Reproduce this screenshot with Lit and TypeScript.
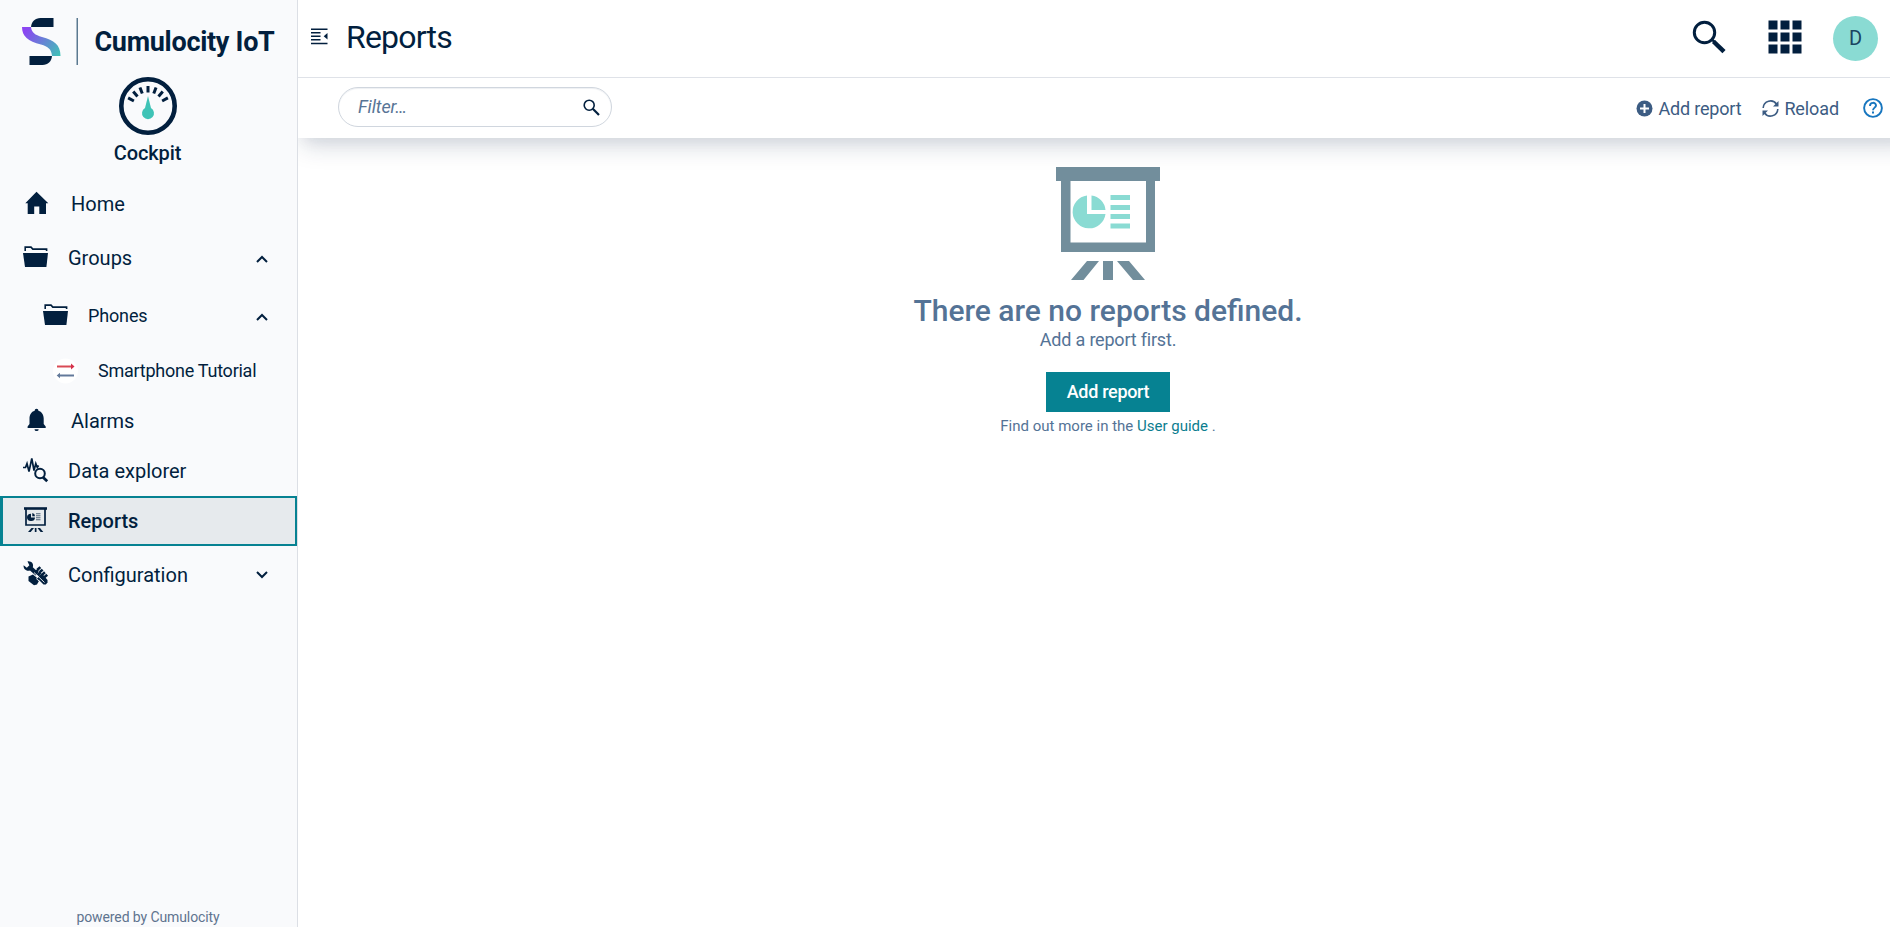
import { LitElement, html, svg, css } from "lit";
import { customElement, property } from "lit/decorators.js";
import { classMap } from "lit/directives/class-map.js";

const folder = svg`
  <path d="M2.2 6V2.1H8L9.8 4.1H23.6V6" fill="none" stroke="currentColor" stroke-width="1.6"/>
  <path d="M0 8H25L23.4 22H2Z"/>`;

const icons: Record<string, unknown> = {
  home: svg`<path d="M13.5 .8 25.3 12.2H23V23H16.3V15.6H11.2V23H4.7V12.2H2.3Z"/>`,
  folder,
  bell: svg`<path d="M13.5 .8c1.2 0 1.9.8 1.9 1.9C18.900 3.700 20.700 6.800 20.700 10.500V16l2 2.600V20H4.600V18.600L6.500 16V10.500C6.500 6.800 8.200 3.700 11.700 2.700 11.700 1.600 12.400.8 13.500.8ZM11.500 21.200h4.200a2.100 1.900 0 0 1-4.200 0Z"/>`,
  data: svg`
    <path d="M0 9.500H2.500L4 5.500 6 13.500 8.800 .500 11 12.500 12.800 5.500 14.300 9.500 15.600 7.500" fill="none" stroke="currentColor" stroke-width="1.700"/>
    <circle cx="17" cy="15.500" r="4.800" fill="none" stroke="currentColor" stroke-width="2"/>
    <path d="M20 19.200 24.200 23.200" stroke="currentColor" stroke-width="2.800"/>`,
  reports: svg`
    <path d="M1 -.8H24V1.800H1Z"/>
    <path d="M3 1V17H22V1" fill="none" stroke="currentColor" stroke-width="1.700"/>
    <path d="M8 5.800V9.500H12A4 3.600 0 1 1 8 5.800Z M9.300 5V8.200H12A3.500 3.300 0 0 0 9.300 5Z"/>
    <path d="M13 5.700H17.500M13 7.700H17.500M13 9.700H17.500M13 11.700H17.500" stroke="currentColor" stroke-width="1.100" opacity=".65"/>
    <path d="M8.500 20H11L7.700 24H5ZM11.800 20H13.500V24H11.800ZM14.500 20H17L20.300 24H17.600Z"/>`,
  config: svg`
    <path d="M4.500 -.600C8.500 -1.200 11 2 9.800 5.300L15.500 10.500 12.700 13.500 7 8.400C3.500 9.600 .200 7 .600 3.200L3.800 5.800 6.400 3.200Z"/>
    <path d="M15 5.500 24 15.500M12.700 8.500 18 14" fill="none" stroke="currentColor" stroke-width="4" stroke-dasharray="2.600 .800"/>
    <path d="M16.500 13 19 11.500 24.500 18V20.500L22.800 22.500H20.500L14.500 16.500Z"/>
    <path d="M5.500 14.500 10 12.500 16.500 18 14 22.500 11 23.300 5.500 19Z"/>
    <path d="M11 10.500 21.500 20.500M16.700 19.500 13.200 16.500" stroke="#f9fafc" stroke-width=".900"/>`,
  link: svg`
    <circle cx="12.500" cy="13" r="12.500" fill="#fff"/>
    <path d="M4 8.500H19" stroke="#d94a55" stroke-width="2"/><path d="M18 5.500 21.500 8.500 18 11.500Z" fill="#d5304a"/>
    <path d="M21 17.500H6" stroke="#62799a" stroke-width="2"/><path d="M7 14.700 3.700 17.500 7 20.300Z" fill="#62799a"/>`,
};

@customElement("nav-item")
class NavItem extends LitElement {
  @property() icon = "";
  @property() label = "";
  @property() chevron = "";
  @property({ type: Number }) level = 0;
  @property({ type: Boolean }) active = false;

  static styles = css`
    :host { display: block; }
    .row { box-sizing: border-box; height: 50px; display: flex; align-items: center; padding: 0 30px 0 23px; color: #021f3e; font-size: 20px; line-height: 26px; }
    .tall { height: 58px; }
    .inset { padding-left: 25px; }
    .child { padding-left: 43px; font-size: 18px; }
    .leaf { padding-left: 53px; font-size: 18px; height: 51px; }
    .active { background: #e6eaed; border: 2px solid #068292; border-left-width: 3px; padding-left: 20px; width: 297px; font-weight: 500; }
    .icon { width: 26px; height: 26px; fill: currentColor; overflow: visible; flex: none; }
    .shift { margin-left: -2px; }
    .label { margin-left: 19px; flex: 1; white-space: nowrap; }
    .child .label { letter-spacing: -0.15px; }
    .leaf .label { letter-spacing: -0.25px; }
    .shift + .label { margin-left: 22px; }
    .chev { width: 12px; height: 8px; margin: 2px -0.5px 0 0; }
    .down { margin: 0 -1px 0 0; }
  `;

  render() {
    const inset = this.icon === "home" || this.icon === "bell";
    return html`<div class=${classMap({ row: true, inset, tall: !!this.chevron, child: this.level === 1, leaf: this.level === 2, active: this.active })}>
      <svg class=${classMap({ icon: true, shift: inset })} viewBox="0 0 26 26">${icons[this.icon]}</svg>
      <span class="label">${this.label}</span>
      ${this.chevron
        ? html`<svg class=${classMap({ chev: true, down: this.chevron === "down" })} viewBox="0 0 12 8"><path d=${this.chevron === "up" ? "M1 7 6 2 11 7" : "M1 1 6 6 11 1"} fill="none" stroke="#021f3e" stroke-width="2"/></svg>`
        : ""}
    </div>`;
  }
}

@customElement("app-root")
class AppRoot extends LitElement {
  static styles = css`
    :host { display: flex; height: 927px; overflow: hidden; font-family: Roboto, sans-serif; color: #021f3e; background: #fff; }
    .side { box-sizing: border-box; width: 298px; flex: none; background: #f9fafc; border-right: 1px solid #dcdfe5; display: flex; flex-direction: column; }
    .brand { display: flex; padding: 18px 0 0 22px; height: 59px; align-items: flex-start; }
    .mark { width: 56px; height: 47px; flex: none; }
    .name { margin-left: 16.5px; font-size: 27px; font-weight: 700; line-height: 48px; white-space: nowrap; letter-spacing: -0.3px; }
    .app { display: flex; flex-direction: column; align-items: center; height: 102px; width: 295px; font-size: 20px; font-weight: 500; line-height: 24px; letter-spacing: -0.1px; }
    .gauge { width: 58px; height: 58px; margin-bottom: 6px; }
    .powered { margin: auto 0 0; width: 296px; text-align: center; font-size: 14px; line-height: 18px; color: #5f748f; letter-spacing: -0.1px; padding-bottom: 1px; }
    .main { flex: 1; min-width: 0; display: flex; flex-direction: column; margin-right: -28px; }
    .header { height: 78px; flex: none; border-bottom: 1px solid #dfe2e8; box-sizing: border-box; display: flex; align-items: center; padding: 0 40px 0 13px; }
    .menu { width: 17px; height: 17px; margin-top: -5px; }
    .title { margin: -3px auto 0 18px; font-size: 32px; font-weight: 400; line-height: 40px; letter-spacing: -0.8px; }
    .search { width: 34px; height: 34px; margin: -4px 42px 0 0; }
    .grid { width: 34px; height: 34px; margin: -4px 31px 0 0; }
    .avatar { width: 45px; height: 45px; border-radius: 50%; background: #8adbd3; display: flex; align-items: center; justify-content: center; font-size: 20px; line-height: 42px; color: #1a4560; }
    .avatar span { margin-top: -2px; }
    .bar { height: 60px; flex: none; background: #fff; display: flex; align-items: center; padding: 0 35px 0 40px; box-shadow: 0 12px 24px -4px rgba(20, 42, 75, .17), 0 8px 14px -5px rgba(20, 42, 75, .06); clip-path: inset(0 0 -60px 0); color: #3c5c83; font-size: 18px; line-height: 24px; }
    .filter { box-sizing: border-box; width: 274px; height: 40px; border: 1px solid #d0d6de; border-radius: 20px; display: flex; align-items: center; justify-content: space-between; padding: 0 11px 0 19px; margin: -2px auto 0 0; color: #587596; font-style: italic; box-shadow: inset 0 1px 1px #eef0f3; letter-spacing: -0.1px; }
    .filter svg { width: 17px; height: 17px; }
    .action { display: flex; align-items: center; gap: 6px; margin-right: 21px; letter-spacing: -0.2px; }
    .action svg { width: 17px; height: 17px; }
    .action span { margin-top: 1px; }
    .reload { margin-right: 24px; gap: 5px; letter-spacing: -0.1px; }
    .help { width: 20px; height: 20px; }
    .empty { display: flex; flex-direction: column; align-items: center; padding-top: 29px; color: #547396; }
    .board { width: 104px; height: 113px; }
    .head { margin: 13px 0 0; font-size: 30px; font-weight: 500; line-height: 36px; }
    .sub { font-size: 18px; line-height: 22px; margin-bottom: 21px; letter-spacing: -0.2px; }
    .btn { font: 500 18px/40px Roboto, sans-serif; background: #068292; color: #fff; border: 0; padding: 0; width: 124px; height: 40px; letter-spacing: -0.3px; }
    .more { margin: 4px 0 0; font-size: 15px; line-height: 20px; }
    .link { color: #0b7d8f; text-decoration: none; }
  `;

  render() {
    return html`
      <aside class="side">
        <div class="brand">
          <svg class="mark" viewBox="0 0 56 47">
            <defs><linearGradient id="g" x1="0" y1="9" x2="38" y2="38" gradientUnits="userSpaceOnUse"><stop offset="0.100" stop-color="#8b45f2"/><stop offset="1" stop-color="#3fc3b6"/></linearGradient></defs>
            <path d="M9 9C9.500 3.500 13 0 18.500 0H31.500V9Z" fill="#021f3e"/>
            <path d="M0 9H9C9.500 14.500 13 17 20 19 32 22.500 38.500 26.500 38.500 38H30C29.500 31 26 28.500 19 26.500 6 23 0 18.500 0 9Z" fill="url(#g)"/>
            <path d="M30 38C29.500 43.500 26 47 20.500 47H7.500V38Z" fill="#021f3e"/>
            <path d="M55.250 0V47" stroke="#5b7990" stroke-width="1.500"/>
          </svg>
          <span class="name">Cumulocity IoT</span>
        </div>
        <div class="app">
          <svg class="gauge" viewBox="0 0 58 58">
            <circle cx="29" cy="29" r="26.700" fill="none" stroke="#021f3e" stroke-width="4.600"/>
            ${[-62, -41, -21, 0, 21, 41, 62].map((a) => svg`<path d="M29 9V15.500" stroke="#021f3e" stroke-width="3" transform="rotate(${a} 29 31.500)"/>`)}
            <path d="M29 19 32 31A6 6 0 1 1 26 31Z" fill="#3fc3b6"/>
          </svg>
          <span>Cockpit</span>
        </div>
        <div>
          <nav-item icon="home" label="Home"></nav-item>
          <nav-item icon="folder" label="Groups" chevron="up"></nav-item>
          <nav-item icon="folder" label="Phones" chevron="up" level="1"></nav-item>
          <nav-item icon="link" label="Smartphone Tutorial" level="2"></nav-item>
          <nav-item icon="bell" label="Alarms"></nav-item>
          <nav-item icon="data" label="Data explorer"></nav-item>
          <nav-item icon="reports" label="Reports" active></nav-item>
          <nav-item icon="config" label="Configuration" chevron="down"></nav-item>
        </div>
        <p class="powered">powered by Cumulocity</p>
      </aside>
      <main class="main">
        <header class="header">
          <svg class="menu" viewBox="0 0 17 17"><path d="M0 1.200H16.500M0 4.800H9.500M0 8.300H9.500M0 11.800H9.500M0 15.500H16.500" stroke="#021f3e" stroke-width="1.500"/><path d="M16.500 5V11.500L12.700 8.300Z" fill="#021f3e"/></svg>
          <h1 class="title">Reports</h1>
          <svg class="search" viewBox="0 0 34 34"><circle cx="12.500" cy="12.500" r="10.200" fill="none" stroke="#021f3e" stroke-width="3"/><path d="M19.500 19.500 23 22" stroke="#021f3e" stroke-width="2.500"/><path d="M21.500 21.500 32 31.700" stroke="#021f3e" stroke-width="4.500"/></svg>
          <svg class="grid" viewBox="0 0 34 34">${[0, 12, 24].map((y) => [0, 12, 24].map((x) => svg`<rect x=${x + 0.5} y=${y + 0.5} width="9" height="9" fill="#021f3e"/>`))}</svg>
          <div class="avatar"><span>D</span></div>
        </header>
        <section class="bar">
          <div class="filter"><span>Filter…</span><svg viewBox="0 0 17 17"><circle cx="6.200" cy="6.200" r="5" fill="none" stroke="#021f3e" stroke-width="1.600"/><path d="M9.800 9.800 16 16" stroke="#021f3e" stroke-width="2.200"/></svg></div>
          <div class="action"><svg viewBox="0 0 17 17"><circle cx="8.500" cy="8.500" r="8" fill="#3c5c83"/><path d="M8.500 4V13M4 8.500H13" stroke="#fff" stroke-width="2"/></svg><span>Add report</span></div>
          <div class="action reload"><svg viewBox="0 0 17 17"><path d="M1.200 8A7.300 7.300 0 0 1 14.600 4.300M15.800 9A7.300 7.300 0 0 1 2.400 12.700" fill="none" stroke="#3c5c83" stroke-width="1.600"/><path d="M16.500 1V6.500H11ZM.5 16V10.500H6Z" fill="#3c5c83"/></svg><span>Reload</span></div>
          <svg class="help" viewBox="0 0 20 20"><circle cx="10" cy="10" r="8.900" fill="none" stroke="#1776bf" stroke-width="1.900"/><path d="M7 8C7 3.800 13 3.900 13 7.500 13 9.500 10 9.800 10 12.200" fill="none" stroke="#1776bf" stroke-width="1.900"/><path d="M9 13.600H11V15.600H9Z" fill="#1776bf"/></svg>
        </section>
        <section class="empty">
          <svg class="board" viewBox="0 0 104 113" fill="#728e9c">
            <path d="M0 0H104V14H99V85H5V14H0ZM14.500 14V75.500H90V14Z" fill-rule="evenodd"/>
            <path d="M31 94H43L27.500 113H15ZM47 94H57V113H47ZM61 94H73L89 113H77Z"/>
            <g fill="#8adbd3"><path d="M31 28.500V47H49.500A16.500 16.500 0 1 1 31 28.500ZM35.500 28.500A16 16 0 0 1 49.500 43H35.500Z"/><path d="M54.500 28H74V33H54.500ZM54.500 38H74V43H54.500ZM54.500 47H74V52H54.500ZM54.500 56.500H74V61.500H54.500Z"/></g>
          </svg>
          <h2 class="head">There are no reports defined.</h2>
          <div class="sub">Add a report first.</div>
          <button class="btn">Add report</button>
          <p class="more">Find out more in the <a class="link">User guide</a> .</p>
        </section>
      </main>`;
  }
}
